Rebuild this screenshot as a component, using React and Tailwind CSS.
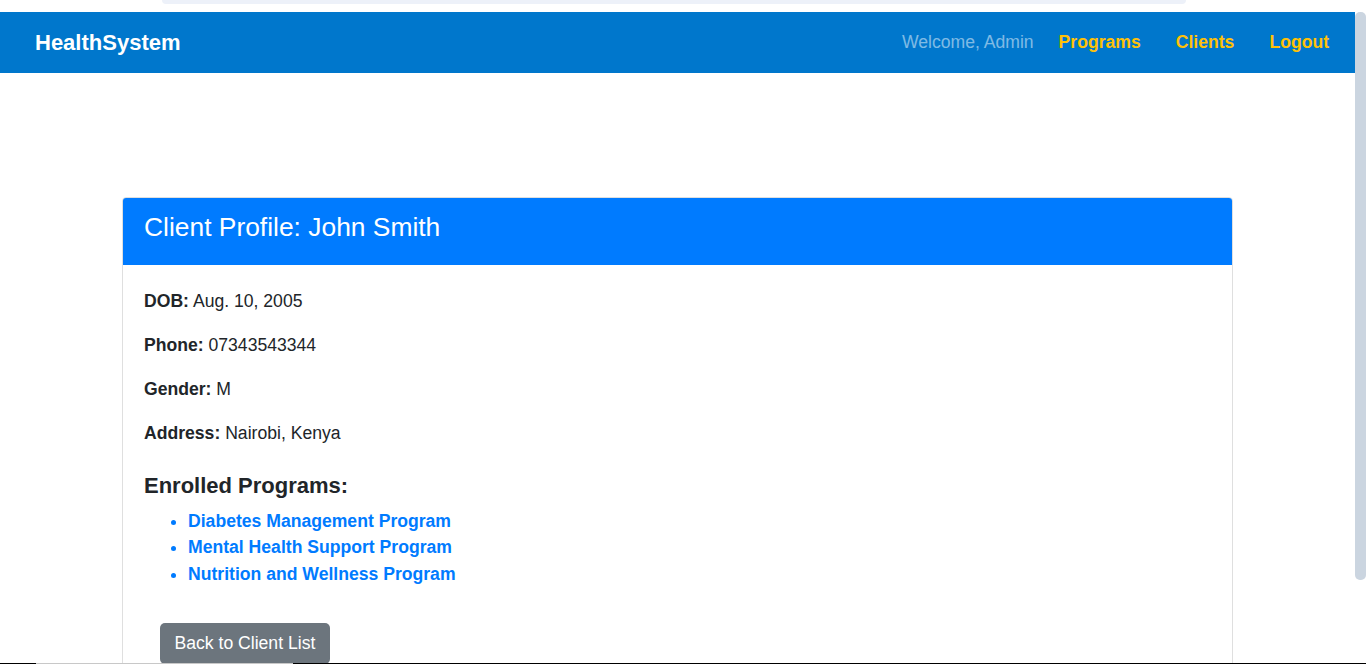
const NAV_LINKS = ["Programs", "Clients", "Logout"];

const CLIENT = [
  { label: "DOB:", value: "Aug. 10, 2005" },
  { label: "Phone:", value: "07343543344" },
  { label: "Gender:", value: "M" },
  { label: "Address:", value: "Nairobi, Kenya" },
];

const PROGRAMS = [
  "Diabetes Management Program",
  "Mental Health Support Program",
  "Nutrition and Wellness Program",
];

export default function App() {
  return (
    <div
      className="relative flex h-[664px] overflow-hidden bg-white text-[#212529]"
      style={{ fontFamily: '"Liberation Sans", Arial, sans-serif' }}
    >
      <div className="flex min-w-0 flex-1 flex-col">
        {/* Top strip */}
        <div className="h-[12px] shrink-0">
          <div className="ml-[162px] h-[4px] w-[1024px] rounded-b-[6px] bg-[#edf1f9]" />
        </div>

        {/* Navbar */}
        <header className="flex h-[61px] shrink-0 items-center justify-between bg-[#0077cc] pl-[35px] pr-[26px]">
          <span className="text-[22px] font-bold text-white">
            HealthSystem
          </span>

          <nav className="flex items-center text-[17.6px]">
            <span className="mr-[25px] text-white/50">Welcome, Admin</span>
            {NAV_LINKS.map((link, i) => (
              <a
                key={link}
                href="#"
                className={`font-bold text-[#ffc107] ${
                  i < NAV_LINKS.length - 1 ? "mr-[35px]" : ""
                }`}
              >
                {link}
              </a>
            ))}
          </nav>
        </header>

        {/* Content */}
        <main className="flex justify-center pt-[124px]">
          <div className="w-[1111px] shrink-0 rounded-[4px] border border-[#dfdfdf]">
            <div className="rounded-t-[3px] bg-[#007bff] px-[21px] pb-[13.2px] pt-[13.6px]">
              <h3 className="mb-[8.8px] text-[26.4px] leading-[31.7px] text-white">
                Client Profile: John Smith
              </h3>
            </div>

            <div className="px-[21px] pb-[22px] pt-[22.6px] text-[17.6px] leading-[26.4px]">
              {CLIENT.map((row) => (
                <p key={row.label} className="mb-[17.6px]">
                  <strong className="font-bold">{row.label}</strong>{" "}
                  {row.value}
                </p>
              ))}

              <h5 className="mb-[8.8px] pt-[9px] text-[22px] font-bold leading-[26.4px]">
                Enrolled Programs:
              </h5>

              <ul className="mb-[17.6px] list-disc pl-[44px] marker:text-[#007bff]">
                {PROGRAMS.map((p) => (
                  <li key={p}>
                    <a href="#" className="font-bold text-[#007bff]">
                      {p}
                    </a>
                  </li>
                ))}
              </ul>

              <button
                type="button"
                className="ml-[16px] mt-[18px] rounded-[5px] bg-[#6c757d] px-[14.5px] py-[7.6px] text-[17.6px] leading-[26.4px] text-white"
              >
                Back to Client List
              </button>
            </div>
          </div>
        </main>
      </div>

      {/* Scrollbar */}
      <aside className="w-[11px] shrink-0 pt-[12px]">
        <div className="h-[568px] w-[11px] rounded-[5px] bg-[#cbd5e0]" />
      </aside>

      {/* Bottom edge line */}
      <div className="absolute bottom-0 left-0 right-0 flex h-px">
        <div className="w-[36px] bg-black" />
        <div className="w-[257px] bg-[#c8c8c8]" />
        <div className="flex-1 bg-black" />
      </div>
    </div>
  );
}
